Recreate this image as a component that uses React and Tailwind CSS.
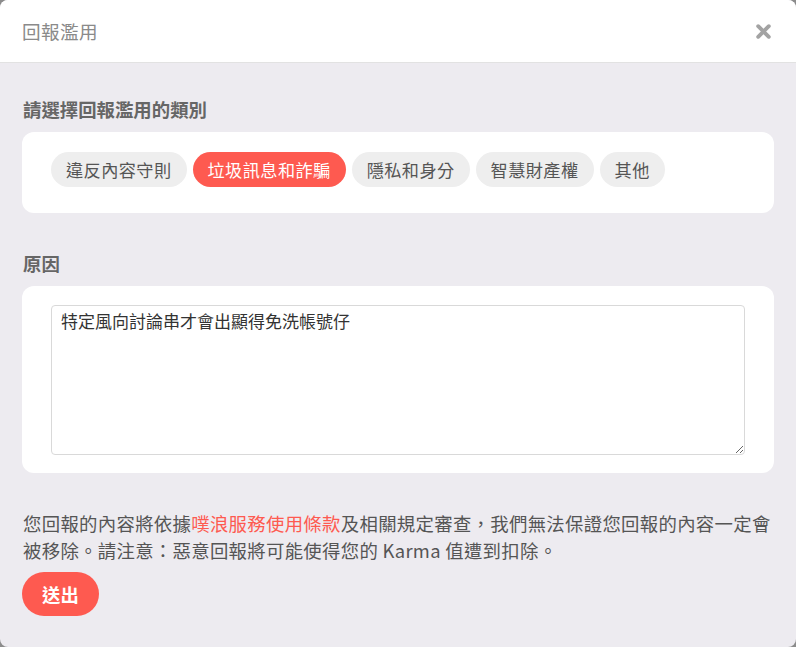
import React, { useState } from 'react';

const CATEGORIES = ['違反內容守則', '垃圾訊息和詐騙', '隱私和身分', '智慧財產權', '其他'];

export default function App() {
  const [selected, setSelected] = useState(1);

  return (
    <div
      className="h-screen w-full bg-[#8c8c8c]"
      style={{ fontFamily: '"Noto Sans CJK TC", "Noto Sans", sans-serif' }}
    >
      <div className="flex h-[647px] w-full flex-col overflow-hidden rounded-[8px] bg-[#edebf0]">
        {/* header */}
        <div className="flex h-[63px] shrink-0 items-center justify-between border-b border-[#e2e2e2] bg-white pl-[22px] pr-[21px]">
          <h1 className="text-[18.6px] font-normal leading-none tracking-[0.4px] text-[#8a8a8a]">回報濫用</h1>
          <button className="flex h-6 w-6 items-center justify-center text-[#a3a3a3]">
            <svg width="17" height="17" viewBox="0 0 16 16">
              <path d="M3 3 L13 13 M13 3 L3 13" stroke="currentColor" strokeWidth="3.6" strokeLinecap="round" />
            </svg>
          </button>
        </div>

        {/* body */}
        <div className="flex flex-col px-[22px] pt-[32px] text-[#555]">
          <h2 className="mb-[9px] pl-px text-[18.4px] font-bold leading-[28px] text-[#666]">請選擇回報濫用的類別</h2>
          <div className="flex flex-wrap gap-[6px] rounded-[12px] bg-white px-[29px] pb-[26px] pt-[20px]">
            {CATEGORIES.map((c, i) => (
              <button
                key={c}
                onClick={() => setSelected(i)}
                className={
                  i === selected
                    ? 'h-[35px] rounded-full bg-[#fe5a50] px-[15px] text-[17.2px] leading-[35px] tracking-[0.4px] text-white'
                    : 'h-[35px] rounded-full bg-[#eeeeee] px-[15px] text-[17.2px] leading-[35px] tracking-[0.4px] text-[#555]'
                }
              >
                {c}
              </button>
            ))}
          </div>

          <h2 className="mb-[9px] mt-[36px] pl-px text-[18.4px] font-bold leading-[28px] text-[#666]">原因</h2>
          <div className="rounded-[12px] bg-white px-[29px] pb-[18px] pt-[19px]">
            <textarea
              defaultValue="特定風向討論串才會出顯得免洗帳號仔"
              className="block h-[150px] w-full resize-y rounded-[4px] border border-[#d9d9d9] px-[9px] py-[2px] text-[17px] leading-[26px] text-[#333] outline-none"
            />
          </div>

          <p className="mt-[37px] pl-px text-[18.4px] leading-[27px] tracking-[0.3px] text-[#555]">
            您回報的內容將依據<a href="#" className="text-[#fe5a50]">噗浪服務使用條款</a>及相關規定審查，我們無法保證您回報的內容一定會被移除。請注意：惡意回報將可能使得您的 Karma 值遭到扣除。
          </p>

          <div className="mt-[8px]">
            <button className="h-[44px] rounded-full bg-[#fe5a50] px-[20px] text-[18.4px] font-bold leading-[44px] text-white">
              送出
            </button>
          </div>
        </div>
      </div>
    </div>
  );
}
